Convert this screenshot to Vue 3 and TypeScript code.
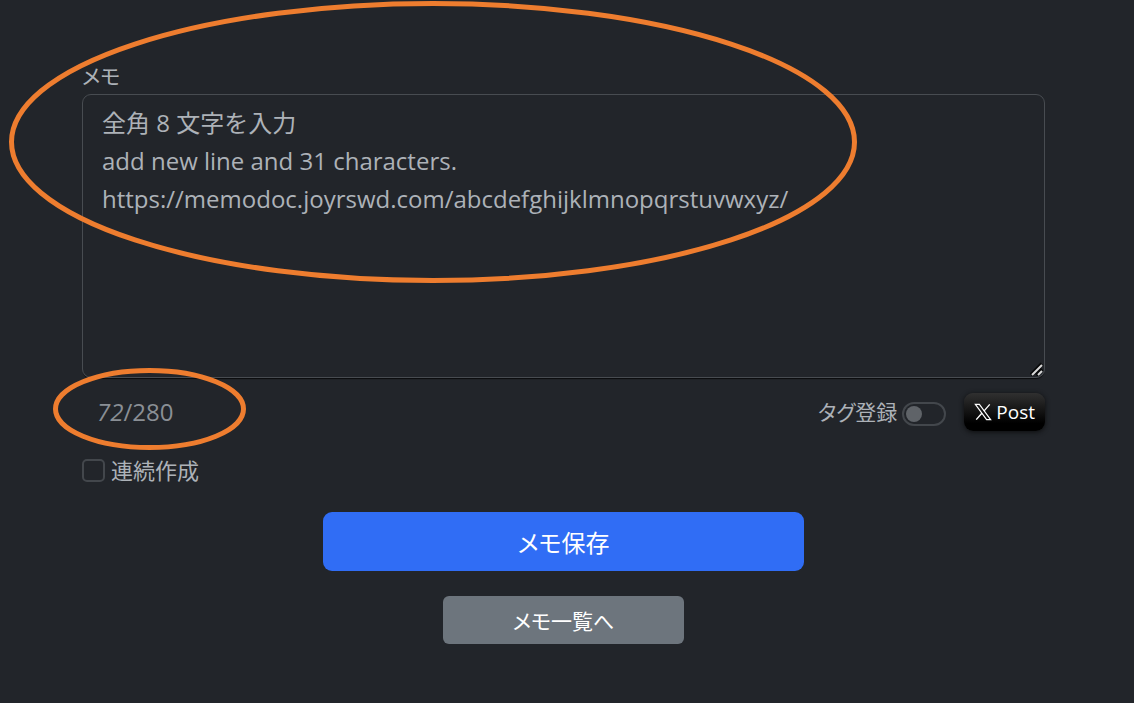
<script setup lang="ts">
import { ref } from 'vue'

const memo = ref<string>(
  '全角 8 文字を入力\nadd new line and 31 characters.\nhttps://memodoc.joyrswd.com/abcdefghijklmnopqrstuvwxyz/',
)
const count = ref<number>(72)
const limit = 280
const tagged = ref<boolean>(false)
const continuous = ref<boolean>(false)
</script>

<template>
  <main class="page">
    <form class="form" @submit.prevent>
      <label class="label" for="memo">メモ</label>
      <div class="field">
        <textarea id="memo" v-model="memo" class="memo" rows="7" spellcheck="false"></textarea>
        <svg class="grip" viewBox="0 0 14 14" aria-hidden="true">
          <path d="M1 13 12 2M6 13 12 7" stroke="#08090a" stroke-width="4" />
          <path d="M2 13 12 3M8 13 12 9" stroke="#d8d8d8" stroke-width="2" />
        </svg>
      </div>

      <div class="toolbar">
        <div class="counter"><em>{{ count }}</em>/{{ limit }}</div>
        <label class="tag" for="tag">タグ登録</label>
        <input id="tag" v-model="tagged" class="switch" type="checkbox" role="switch" />
        <button class="post" type="button">
          <svg class="x-logo" viewBox="0 0 20 20" aria-hidden="true">
            <path d="M1.5 1.5H6L18.5 18.5H14Z" fill="none" stroke="#fff" stroke-width="1.3" />
            <path d="M17.5 1.5 11 9M8.7 11.4 2.5 18.5" fill="none" stroke="#fff" stroke-width="1.5" />
          </svg>
          <span>Post</span>
        </button>
      </div>

      <div class="check-row">
        <input id="continuous" v-model="continuous" class="check" type="checkbox" />
        <label for="continuous">連続作成</label>
      </div>

      <button class="save" type="submit">メモ保存</button>
      <button class="list" type="button">メモ一覧へ</button>
    </form>

    <svg class="mark mark-memo" viewBox="0 0 848 282" aria-hidden="true">
      <ellipse cx="424" cy="141" rx="421.5" ry="138.5" />
    </svg>
    <svg class="mark mark-count" viewBox="0 0 193 82" aria-hidden="true">
      <ellipse cx="96.5" cy="41" rx="94" ry="38.5" />
    </svg>
  </main>
</template>

<style>
body {
  background: #22252a;
}
</style>

<style scoped>
.page {
  position: relative;
  box-sizing: border-box;
  min-height: 100vh;
  padding: 60px 89px 56px 82px;
  overflow: hidden;
  background: #22252a;
  color: #adb2b8;
  font-family: "Open Sans", "Noto Sans CJK JP", sans-serif;
  font-size: 22px;
  line-height: 32px;
}

.form {
  display: flex;
  flex-direction: column;
}

.label,
.tag,
.save,
.list {
  font-feature-settings: "palt";
}

.label,
.tag {
  font-size: 21px;
}

.label {
  align-self: flex-start;
  margin-bottom: 2px;
}

.field {
  position: relative;
}

.memo {
  display: block;
  box-sizing: border-box;
  width: 100%;
  margin: 0;
  padding: 9px 19px 7px;
  border: 1px solid #484c51;
  border-radius: 9px;
  outline: none;
  background: transparent;
  box-shadow: 0 2px 1px -1px #0b0c0d;
  color: inherit;
  font-family: "Open Sans", "Noto Sans CJK JP", sans-serif;
  font-size: 24px;
  line-height: 38px;
  resize: none;
  overflow: hidden;
}

.grip {
  position: absolute;
  right: 1px;
  bottom: 2px;
  width: 14px;
  height: 14px;
}

.toolbar {
  display: flex;
  align-items: center;
  margin-top: 15px;
}

.counter {
  flex: 1;
  padding-left: 15px;
  color: #8a8f95;
  font-size: 24px;
}

.switch {
  appearance: none;
  box-sizing: border-box;
  display: flex;
  align-items: center;
  width: 44px;
  height: 24px;
  margin: 4px 18px 0 5px;
  padding: 0 2px;
  border: 2px solid #43474c;
  border-radius: 12px;
}

.switch::before {
  content: "";
  width: 16px;
  height: 16px;
  border-radius: 50%;
  background: #5f6368;
}

.switch:checked {
  justify-content: flex-end;
}

.post {
  display: flex;
  align-items: center;
  gap: 4px;
  height: 38px;
  padding: 0 10px;
  border: 0;
  border-radius: 9px;
  background: linear-gradient(#303030, #000 80%);
  box-shadow: 0 1px 5px #0c0d0e;
  color: #fff;
  font-family: "Open Sans", sans-serif;
  font-size: 19px;
  font-weight: 500;
}

.x-logo {
  width: 18px;
  height: 18px;
}

.check-row {
  display: flex;
  align-items: center;
  gap: 6px;
  margin-top: 23px;
}

.check {
  appearance: none;
  box-sizing: border-box;
  width: 23px;
  height: 23px;
  margin: 0;
  border: 2px solid #43474c;
  border-radius: 5px;
}

.check:checked {
  background: #306df5;
}

.save,
.list {
  align-self: center;
  padding: 0;
  border: 0;
  color: #fff;
  font-family: "Open Sans", "Noto Sans CJK JP", sans-serif;
}

.save {
  width: 50%;
  height: 59px;
  margin-top: 26px;
  border-radius: 9px;
  background: #306df5;
  font-size: 24px;
}

.list {
  width: 25%;
  height: 48px;
  margin-top: 25px;
  border-radius: 6px;
  background: #6d757d;
  font-size: 21px;
}

.mark {
  position: absolute;
  fill: none;
  stroke: #ee7d2f;
  stroke-width: 5;
  pointer-events: none;
}

.mark-memo {
  top: 1px;
  left: 9px;
  width: 848px;
  height: 282px;
}

.mark-count {
  top: 368px;
  left: 53px;
  width: 193px;
  height: 82px;
}
</style>
